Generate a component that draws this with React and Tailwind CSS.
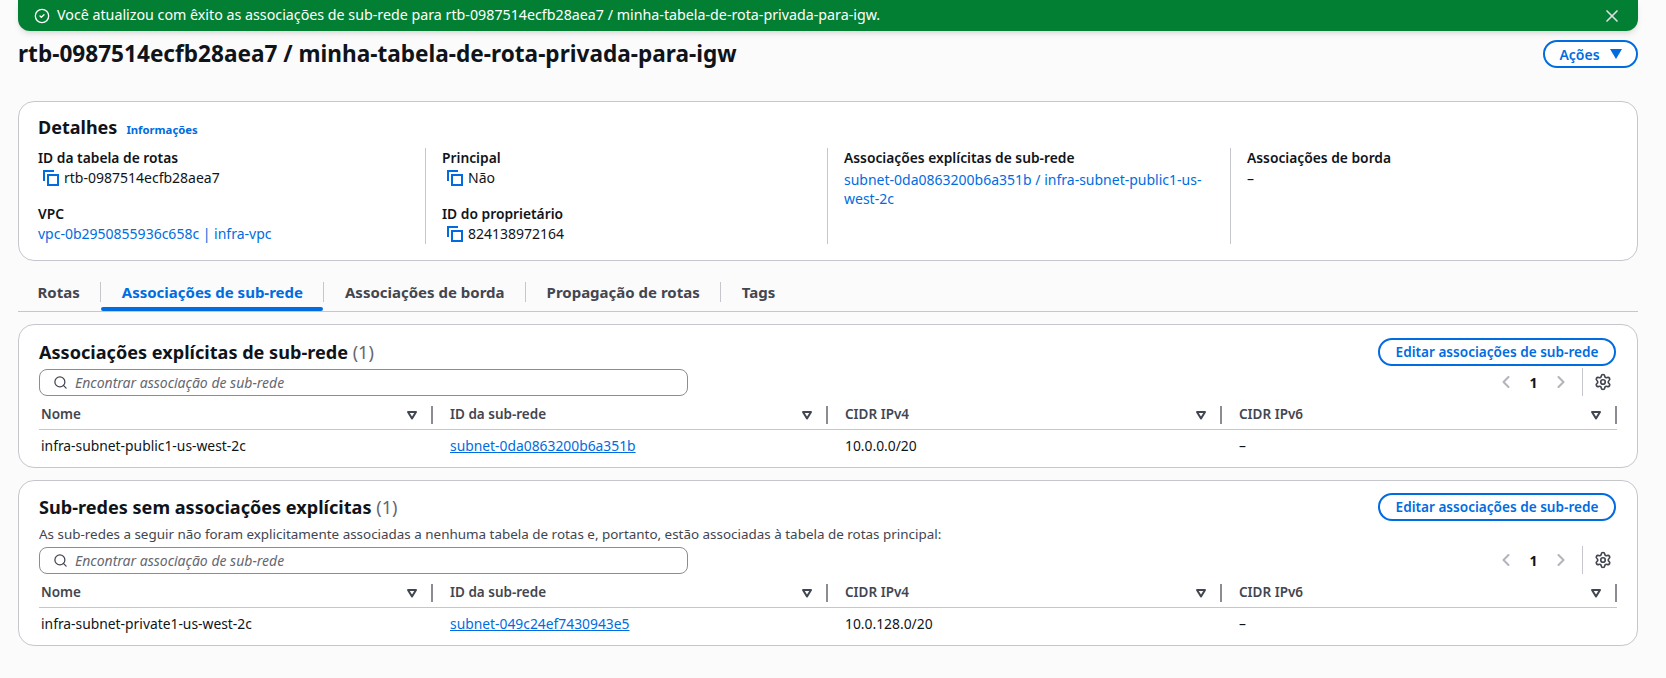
import React from 'react';
import { CircleCheck, ChevronLeft, ChevronRight, Search, Settings, X } from 'lucide-react';

const font = { fontFamily: '"Noto Sans", sans-serif' };

function CopyIcon() {
  return (
    <svg viewBox="0 0 16 16" className="h-4 w-4 shrink-0 text-[#006ce0]" fill="none" stroke="currentColor" strokeWidth="2">
      <path d="M1 11V1h10" />
      <rect x="5" y="5" width="10" height="10" />
    </svg>
  );
}

function Field({ label, children }) {
  return (
    <div>
      <div className="text-[13.8px] font-semibold leading-[20px] text-[#0f141a]">{label}</div>
      {children}
    </div>
  );
}

function Copyable({ value }) {
  return (
    <div className="flex items-center gap-[5px] pl-[5px] text-[14px] leading-[20px] text-[#0f141a]">
      <CopyIcon />
      <span>{value}</span>
    </div>
  );
}

function SortIcon() {
  return (
    <svg viewBox="0 0 12 12" className="h-3 w-3 shrink-0 text-[#424650]" fill="none" stroke="currentColor" strokeWidth="2">
      <path d="M2 3h8L6 9.5z" strokeLinejoin="round" />
    </svg>
  );
}

function HeaderCell({ title, first }) {
  return (
    <div className="flex h-[29px] items-center">
      <div className={`flex-1 text-[13.5px] font-semibold text-[#424650] ${first ? 'pl-[2px]' : 'pl-[17px]'}`}>{title}</div>
      <SortIcon />
      <div className="ml-[13px] h-[18px] w-[2px] bg-[#8c8c94]" />
    </div>
  );
}

function Table({ name, subnet, cidr }) {
  return (
    <div className="mt-[4px]">
      <div className="grid grid-cols-[394px_395px_394px_395px] border-b border-[#c6c6cd]">
        <HeaderCell first title="Nome" />
        <HeaderCell title="ID da sub-rede" />
        <HeaderCell title="CIDR IPv4" />
        <HeaderCell title="CIDR IPv6" />
      </div>
      <div className="grid h-[33px] grid-cols-[394px_395px_394px_395px] items-center text-[13.85px] text-[#0f141a]">
        <div className="pl-[2px]">{name}</div>
        <a className="pl-[17px] text-[#006ce0] underline">{subnet}</a>
        <div className="pl-[17px]">{cidr}</div>
        <div className="pl-[17px]">–</div>
      </div>
    </div>
  );
}

function Toolbar() {
  return (
    <div className="flex items-center justify-between">
      <div className="flex h-[27px] w-[649px] items-center gap-[7px] rounded-lg border border-[#8c8c94] bg-white pl-[13px]">
        <Search className="h-[15px] w-[15px] text-[#424650]" strokeWidth={2} />
        <span className="text-[14px] italic text-[#656871]">Encontrar associação de sub-rede</span>
      </div>
      <div className="flex items-center pr-[5px] text-[#0f141a]">
        <ChevronLeft className="h-5 w-5 text-[#b4b4bb]" strokeWidth={2.5} />
        <span className="w-[35px] text-center text-[14px] font-bold">1</span>
        <ChevronRight className="h-5 w-5 text-[#b4b4bb]" strokeWidth={2.5} />
        <div className="mx-[11px] h-[28px] w-px bg-[#c6c6cd]" />
        <Settings className="h-[18px] w-[18px] text-[#424650]" strokeWidth={2.2} />
      </div>
    </div>
  );
}

function SectionHeader({ title }) {
  return (
    <div className="flex items-center justify-between">
      <h2 className="text-[18.1px] font-bold leading-[26px] text-[#0f141a]">
        {title} <span className="font-normal text-[#656871]">(1)</span>
      </h2>
      <button className="mr-px flex h-[28px] w-[238px] items-center justify-center rounded-full border-2 border-[#006ce0] bg-white text-[13.6px] font-semibold text-[#006ce0]">
        Editar associações de sub-rede
      </button>
    </div>
  );
}

const tabs = ['Rotas', 'Associações de sub-rede', 'Associações de borda', 'Propagação de rotas', 'Tags'];

export default function App() {
  return (
    <div style={font} className="h-[678px] overflow-hidden bg-[#fbfbfb] pl-[18px] pr-[28px]">
      {/* flash */}
      <div className="flex h-[31px] items-center rounded-b-xl bg-[#037f33] pl-[16px] pr-[16px] text-white shadow-md">
        <CircleCheck className="h-4 w-4" strokeWidth={2} />
        <span className="ml-[7px] text-[14.25px] leading-none">Você atualizou com êxito as associações de sub-rede para rtb-0987514ecfb28aea7 / minha-tabela-de-rota-privada-para-igw.</span>
        <X className="ml-auto h-5 w-5 text-[#dedee3]" strokeWidth={2} />
      </div>

      {/* header */}
      <div className="mt-[8px] flex items-center justify-between">
        <h1 className="text-[22.6px] font-bold leading-[30px] text-[#0f141a]">rtb-0987514ecfb28aea7 / minha-tabela-de-rota-privada-para-igw</h1>
        <button className="flex h-[28px] w-[95px] items-center justify-center gap-[10px] rounded-full border-2 border-[#006ce0] bg-white text-[14px] font-semibold text-[#006ce0]">
          Ações
          <svg viewBox="0 0 12 10" className="h-[10px] w-3 fill-[#006ce0]"><path d="M0 0h12L6 10z" /></svg>
        </button>
      </div>

      {/* details */}
      <div className="mt-[32px] h-[160px] rounded-2xl border border-[#c6c6cd] bg-white px-[19px] pt-[13px]">
        <div className="flex items-baseline gap-[9px]">
          <h2 className="text-[18px] font-bold leading-[24px] text-[#0f141a]">Detalhes</h2>
          <a className="text-[11.3px] font-bold text-[#006ce0]">Informações</a>
        </div>
        <div className="mt-[9px] grid h-[96px] grid-cols-[387px_402px_403px_1fr]">
          <div className="flex flex-col gap-[16px]">
            <Field label="ID da tabela de rotas"><Copyable value="rtb-0987514ecfb28aea7" /></Field>
            <Field label="VPC">
              <a className="block text-[14px] leading-[20px] text-[#006ce0]">vpc-0b2950855936c658c | infra-vpc</a>
            </Field>
          </div>
          <div className="flex flex-col gap-[16px] border-l border-[#c6c6cd] pl-[16px]">
            <Field label="Principal"><Copyable value="Não" /></Field>
            <Field label="ID do proprietário"><Copyable value="824138972164" /></Field>
          </div>
          <div className="border-l border-[#c6c6cd] pl-[16px] pr-[20px]">
            <Field label="Associações explícitas de sub-rede">
              <a className="block pt-[2px] text-[14px] leading-[19px] text-[#006ce0]">subnet-0da0863200b6a351b / infra-subnet-public1-us-west-2c</a>
            </Field>
          </div>
          <div className="border-l border-[#c6c6cd] pl-[16px]">
            <Field label="Associações de borda">
              <div className="pt-[1px] text-[14px] leading-[19px] text-[#0f141a]">–</div>
            </Field>
          </div>
        </div>
      </div>

      {/* tabs */}
      <div className="mt-[18px] flex h-[33px] items-center border-b border-[#c6c6cd] pb-[6px]">
        {tabs.map((t, i) => (
          <div key={t} className={`flex h-[20px] items-center ${i > 0 ? 'border-l border-[#c6c6cd]' : '-ml-px'}`}>
            <div className={`relative px-[20.5px] text-[15px] font-bold leading-[24px] ${i === 1 ? 'text-[#006ce0]' : 'text-[#424650]'}`}>
              {t}
              {i === 1 && <div className="absolute inset-x-0 top-[27px] h-[4px] rounded bg-[#006ce0]" />}
            </div>
          </div>
        ))}
      </div>

      {/* explicit */}
      <div className="mt-[12px] h-[144px] rounded-2xl border border-[#c6c6cd] bg-white px-[20px] pt-[13px]">
        <SectionHeader title="Associações explícitas de sub-rede" />
        <div className="mt-[2px]"><Toolbar /></div>
        <Table name="infra-subnet-public1-us-west-2c" subnet="subnet-0da0863200b6a351b" cidr="10.0.0.0/20" />
      </div>

      {/* without */}
      <div className="mt-[12px] h-[166px] rounded-2xl border border-[#c6c6cd] bg-white px-[20px] pt-[12px]">
        <SectionHeader title="Sub-redes sem associações explícitas" />
        <p className="mt-[4px] text-[13.43px] leading-[18px] text-[#424650]">As sub-redes a seguir não foram explicitamente associadas a nenhuma tabela de rotas e, portanto, estão associadas à tabela de rotas principal:</p>
        <div className="mt-[3px]"><Toolbar /></div>
        <Table name="infra-subnet-private1-us-west-2c" subnet="subnet-049c24ef7430943e5" cidr="10.0.128.0/20" />
      </div>
    </div>
  );
}
